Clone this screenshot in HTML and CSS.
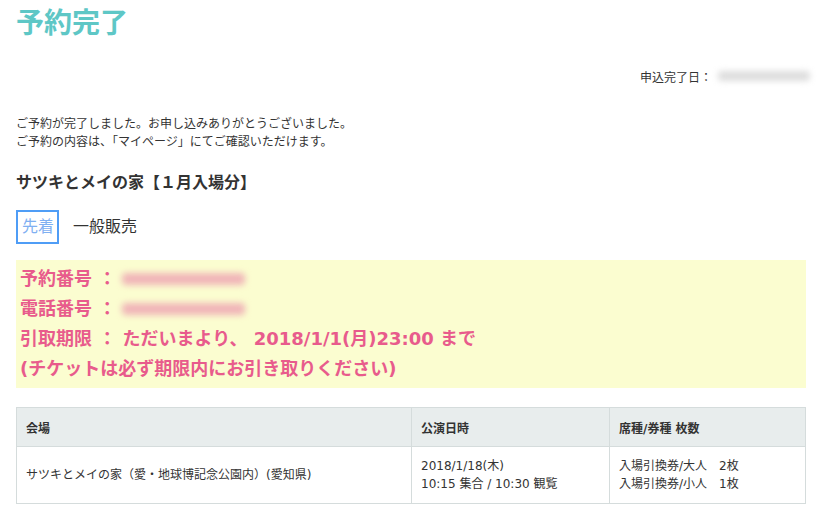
FILE: index.html
```html
<!DOCTYPE html>
<html lang="ja">
<head>
<meta charset="utf-8">
<link rel="stylesheet" href="styles.css">
</head>
<body>
<div class="page">
  <h1 class="title">予約完了</h1>
  <div class="date-row">
    <span class="date-label">申込完了日：</span>
    <span class="blur blur-gray"></span>
  </div>
  <p class="message">ご予約が完了しました。お申し込みありがとうございました。<br>ご予約の内容は、「マイページ」にてご確認いただけます。</p>
  <h2 class="event">サツキとメイの家【１月入場分】</h2>
  <div class="tabs">
    <span class="tab active">先着</span>
    <span class="tab">一般販売</span>
  </div>
  <div class="notice">
    <div class="notice-line">予約番号 ： <span class="blur blur-pink"></span></div>
    <div class="notice-line">電話番号 ： <span class="blur blur-pink"></span></div>
    <div class="notice-line">引取期限 ： ただいまより、 2018/1/1(月)23:00 まで</div>
    <div class="notice-line">(チケットは必ず期限内にお引き取りください)</div>
  </div>
  <table class="detail">
    <thead>
      <tr><th class="c1">会場</th><th class="c2">公演日時</th><th class="c3">席種/券種 枚数</th></tr>
    </thead>
    <tbody>
      <tr>
        <td>サツキとメイの家（愛・地球博記念公園内）(愛知県)</td>
        <td>2018/1/18(木)<br>10:15 集合 / 10:30 観覧</td>
        <td>入場引換券/大人　2枚<br>入場引換券/小人　1枚</td>
      </tr>
    </tbody>
  </table>
</div>
</body>
</html>
```

FILE: styles.css
```css
html, body {
  margin: 0;
  padding: 0;
  background: #fff;
}
body {
  font-family: "DejaVu Sans", "Noto Sans CJK JP", sans-serif;
  color: #333;
  font-size: 12px;
}
.page {
  padding: 0 16px;
}
.title {
  margin: 0;
  padding-top: 4px;
  font-size: 28px;
  line-height: 40px;
  font-weight: bold;
  color: #5ec7c6;
}
.date-row {
  display: flex;
  justify-content: flex-end;
  align-items: center;
  margin-top: 22px;
  height: 20px;
}
.date-label {
  font-size: 12px;
  color: #333;
  margin-right: 6px;
}
.blur {
  display: inline-block;
  filter: blur(3px);
  border-radius: 4px;
}
.blur-gray {
  width: 92px;
  height: 10px;
  background: #ddd;
  margin-right: -4px;
}
.message {
  margin: 29px 0 0;
  line-height: 18px;
  font-size: 12px;
}
.event {
  margin: 21px 0 0;
  font-size: 16px;
  line-height: 22px;
  font-weight: bold;
  color: #333;
}
.tabs {
  display: flex;
  align-items: center;
  margin-top: 16px;
  gap: 14px;
}
.tab {
  font-size: 16px;
  line-height: 30px;
  color: #333;
}
.tab.active {
  border: 2px solid #4f9df6;
  color: #7fb0f2;
  padding: 0 3px 0 4px;
}
.notice {
  margin-top: 16px;
  background: #fbfdd0;
  padding: 4px 4px 4px;
  color: #e85b8c;
  font-weight: bold;
  font-size: 18px;
}
.notice-line {
  line-height: 30px;
  display: flex;
  align-items: center;
  white-space: pre;
}
.blur-pink {
  width: 123px;
  height: 12px;
  background: #f0b5b8;
  margin-left: -1px;
}
.detail {
  margin-top: 19px;
  width: 100%;
  border-collapse: collapse;
  border: 1px solid #d5dcdc;
  font-size: 12px;
}
.detail th, .detail td {
  border: 1px solid #d5dcdc;
  text-align: left;
  padding: 0 9px;
}
.detail th {
  background: #e8eded;
  height: 38px;
  font-weight: bold;
}
.detail td {
  height: 56px;
  line-height: 18px;
}
.c1 { width: 376px; }
.c2 { width: 179px; }
```
